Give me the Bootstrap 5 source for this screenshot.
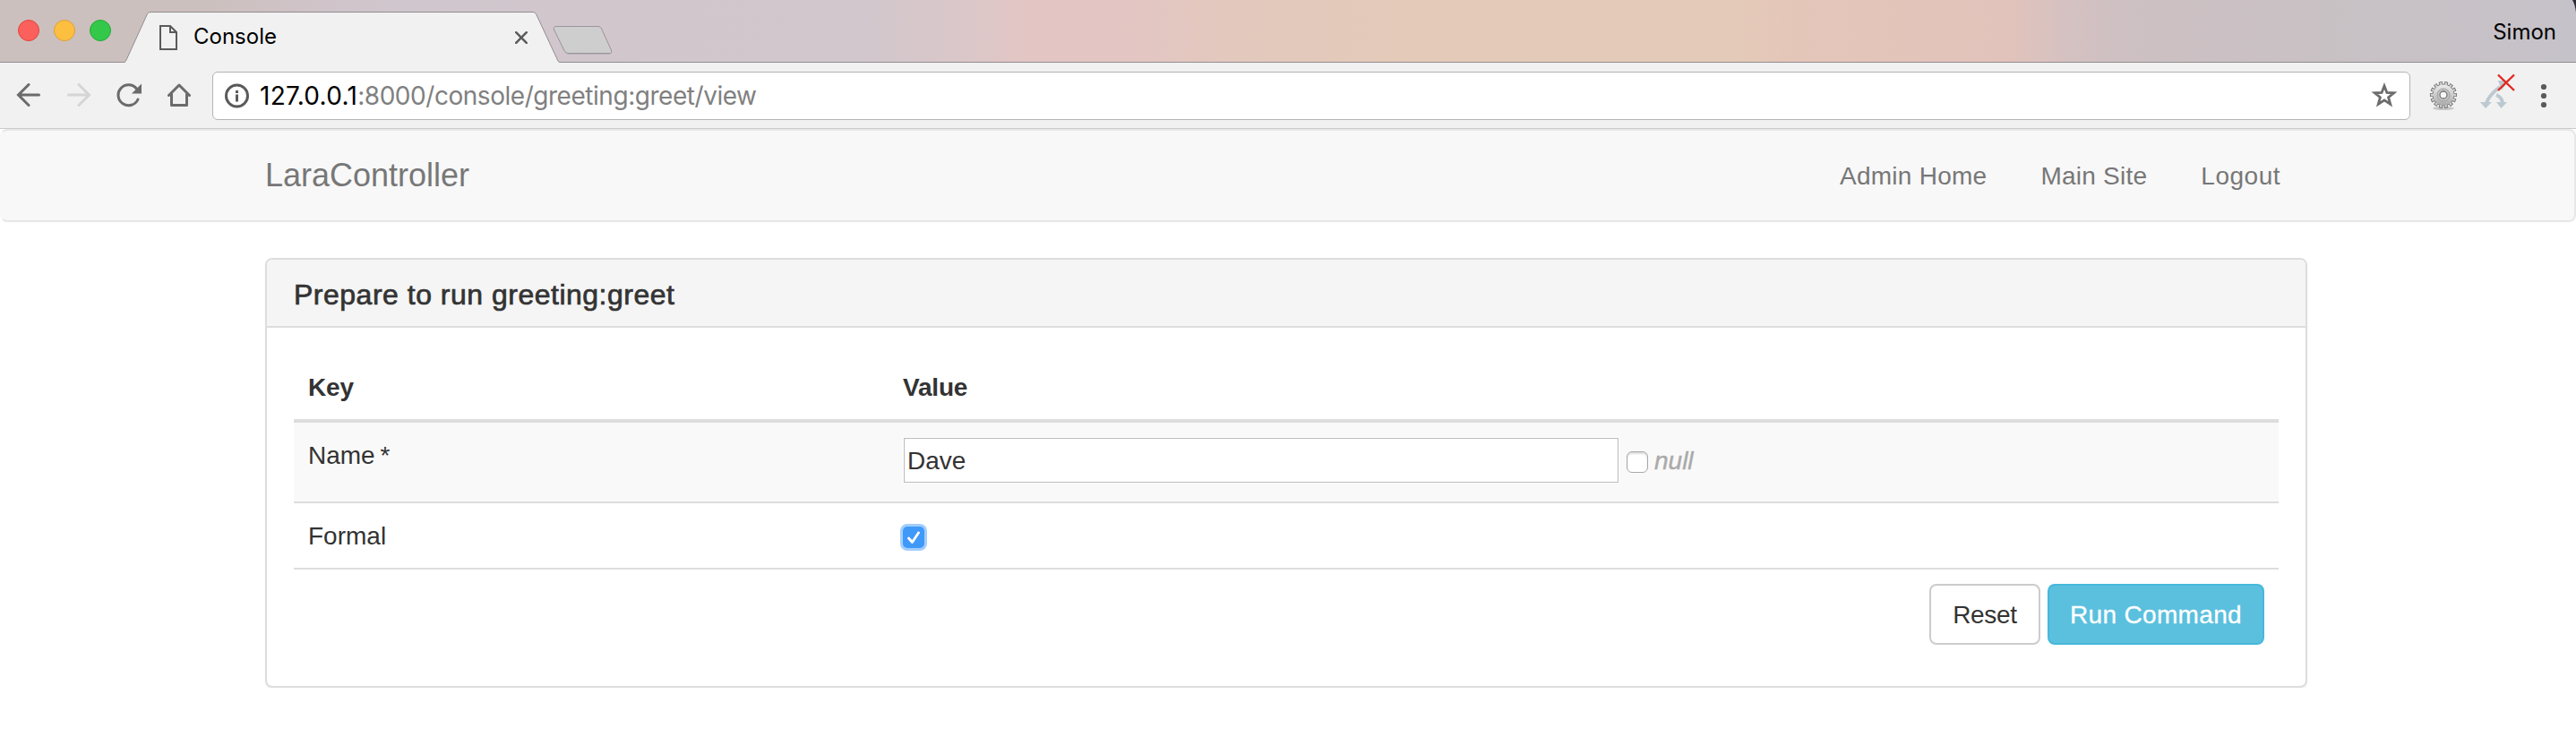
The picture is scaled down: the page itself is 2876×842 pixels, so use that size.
<!DOCTYPE html>
<html lang="en">
<head>
<meta charset="utf-8">
<title>Console</title>
<link href="https://cdn.jsdelivr.net/npm/bootstrap@5.3.0/dist/css/bootstrap.min.css" rel="stylesheet">
<script src="https://cdn.jsdelivr.net/npm/bootstrap@5.3.0/dist/js/bootstrap.bundle.min.js"></script>
<style>
  body { font: 28px/40px "Liberation Sans", Arial, sans-serif; color: #333; background: #fff; overflow: hidden; }
  svg { display: block; flex: none; }

  /* browser window */
  .titlebar {
    height: 70px; border-bottom: 1px solid #918d90; font-family: Inter, sans-serif; font-size: 24px; line-height: 30px; color: #000;
    background: linear-gradient(90deg, #ccc0be 0, #ccc0be 230px, #cfc3c7 330px, #d0c6cd 440px, #d2c7cc 972px, #dac7c9 1070px, #e3c6c4 1150px, #e3c6c2 1284px, #e3c9bd 1394px, #e4cab9 1559px, #e4cbb9 1926px, #e4c6b9 2000px, #e2c3bb 2238px, #d5c1c1 2310px, #cec0c3 2366px, #c8c1c4 2600px, #c6c2c9 2876px);
  }
  .lights { padding: 22px 0 0 20px; gap: 16px; width: 139px; }
  .light { width: 24px; height: 24px; border-radius: 50%; border: 1px solid; }
  .light-red { background: #fc605c; border-color: #e0443f; }
  .light-yellow { background: #fdbf40; border-color: #de9f34; }
  .light-green { background: #34c84a; border-color: #24aa36; }
  .tab { width: 486px; height: 70px; padding: 0 36px 0 39px; }
  .tab-shape { left: 0; top: 0; }
  .tab-page { margin-top: 28px; }
  .tab-label { margin: 26px 0 0 18px; }
  .tab-close { margin-top: 35px; }
  .newtab { margin: 28px 0 0 -8px; }
  .user { padding: 21px 22px 0 0; }
  .window-corner { right: 0; top: 0; }

  .toolbar { height: 74px; background: #f1f1f1; border-bottom: 1px solid #cbcbcb; padding: 0 24px 0 18px; }
  .tools { gap: 28px; width: 219px; }
  .omnibox {
    width: 2454px; height: 54px; border: 1px solid #b4b4b4; border-radius: 6px; background: #fff; padding: 0 13px;
    font: 28px/40px Inter, sans-serif; letter-spacing: -.46px; color: #808080;
  }
  .url { margin-left: 11px; padding-top: 1px; }
  .url-host { color: #000; letter-spacing: .3px; }
  .ext-gear { margin-left: 20px; }
  .ext-arrows { margin: -8px 0 0 24px; }

  /* page */
  .site-nav { height: 104px; background: #f8f8f8; border: 2px solid #e7e7e7; border-left-color: #f8f8f8; border-radius: 8px; padding: 0 300px 0 294px; }
  .navbar-brand.site-brand { font-size: 36px; line-height: 40px; color: #777; padding: 0; margin: 0; }
  .site-links { gap: 60px; margin: 2px 28px 0 0; }
  .site-links .nav-link { color: #777; padding: 0; letter-spacing: .25px; }
  .site-links .nav-link:last-child { letter-spacing: .5px; }
  .console-panel { width: 2280px; margin: 40px 0 0 296px; border: 2px solid #ddd; border-radius: 8px; box-shadow: 0 2px 2px rgba(0,0,0,.05); }
  .console-panel > .card-header { height: 76px; background: #f5f5f5; border-bottom: 2px solid #ddd; border-radius: 6px 6px 0 0; padding: 19px 30px 0; }
  .panel-heading { font-size: 32px; line-height: 40px; font-weight: 400; letter-spacing: .5px; -webkit-text-stroke: .7px #333; margin: 0; }
  .console-panel > .card-body { padding: 30px; }
  .params { margin: 0; color: #333; --bs-table-bg: transparent; table-layout: fixed; }
  .params > :not(caption) > * > * { padding: 16px; border: 0; border-top: 2px solid #ddd; color: #333; }
  .params > thead > tr > th { border-top: 0; padding: 17px 16px 15px; letter-spacing: -.2px; }
  .params > tbody > tr:first-child > td { border-top-width: 4px; background: #f9f9f9; box-shadow: none; }
  .params > tbody > tr > td.param-name { padding: 17px 16px 15px; word-spacing: -2px; }
  .params .key { width: 664px; }
  .value-row { margin: 1px 0 5px 1px; }
  .value-input { width: 798px; height: 50px; border: 1px solid #bbb; border-radius: 0; background: #fff; padding: 2px 3px 0; font: inherit; color: #333; outline: 1px solid #fff; }
  .null-box { width: 24px; height: 24px; border: 1px solid #a8a8a8; border-radius: 6px; background: #fff; box-shadow: inset 0 2px 2px #ddd; margin: 3px 7px 0 9px; }
  .null-label { color: #aaa; padding-top: 1px; -webkit-text-stroke: .4px #aaa; }
  .check-on { width: 24px; height: 24px; border-radius: 5px; background: #3f99f9; box-shadow: 0 0 0 3px #a2cdfc; margin-top: 10px; }
  .action { height: 68px; border: 2px solid #ccc; border-radius: 8px; font-size: 28px; line-height: 40px; padding: 13px 0 11px; white-space: nowrap; }
  .action-reset { width: 124px; background: #fff; color: #333; letter-spacing: -.3px; }
  .action-run { width: 242px; background: #5bc0de; border-color: #46b8da; color: #fff; letter-spacing: .33px; -webkit-text-stroke: .3px #fff; }
</style>
</head>
<body>
<header>
  <div class="titlebar d-flex position-relative">
    <div class="lights d-flex">
      <span class="light light-red"></span><span class="light light-yellow"></span><span class="light light-green"></span>
    </div>
    <div class="tab d-flex position-relative align-items-start">
      <svg class="tab-shape position-absolute" width="486" height="70" viewBox="0 0 486 70"><path d="M0 70 Q1 69 2 67 L25.500 15.500 Q27 13.500 29 13.500 H456 Q458 13.500 459.500 15.500 L483.500 67 Q485 69.500 486 70Z" fill="#f1f1f1"/><path d="M0 69.500 Q1 69 2 67 L25.500 15.500 Q27 13.500 29 13.500 H456 Q458 13.500 459.500 15.500 L483.500 67 Q484.500 69.500 486 69.500" fill="none" stroke="#918d90"/></svg>
      <svg class="tab-page position-relative" width="20" height="28" viewBox="0 0 20 28" fill="none" stroke="#5a5a5a" stroke-width="2"><path d="M1 1H12L19 8V27H1ZM12 1V8H19"/></svg>
      <span class="tab-label position-relative">Console</span>
      <svg class="tab-close position-relative ms-auto" width="14" height="14" viewBox="0 0 14 14" stroke="#5a5a5a" stroke-width="2.500" stroke-linecap="round"><path d="M1.200 1.200 12.800 12.800M12.800 1.200 1.200 12.800"/></svg>
    </div>
    <svg class="newtab" width="68" height="34" viewBox="0 0 68 34"><path d="M5 2.500H50Q53 2.500 54.500 5L65.500 29Q66.500 32.500 63 32.500H19Q15 32.500 13 29L2 5Q1 2.500 4 2.500" stroke="#b9b2b6" fill="none"/><path d="M4 1.500H51Q53.500 1.500 54.500 4L65.500 28Q66.500 31.500 63 31.500H17Q14.500 31.500 13 28.500L1.500 5Q.500 1.500 4 1.500Z" fill="#cecece" stroke="#9a9699"/></svg>
    <span class="user ms-auto">Simon</span>
    <svg class="window-corner position-absolute" width="4" height="14" viewBox="0 0 4 14"><path d="M0 0H4V14Q3 5 0 0Z" fill="#2c2a38"/></svg>
  </div>

  <div class="toolbar d-flex align-items-center">
    <div class="tools d-flex">
      <svg width="28" height="28" viewBox="0 0 28 28" fill="none" stroke="#6b6b6b" stroke-width="3" stroke-linecap="round"><path d="M25.500 13H3M14 1.500 2.500 13 14 24.500"/></svg>
      <svg width="28" height="28" viewBox="0 0 28 28" fill="none" stroke="#d5d5d5" stroke-width="3" stroke-linecap="round"><path d="M2.500 13H25M14 1.500 25.500 13 14 24.500"/></svg>
      <svg width="28" height="28" viewBox="0 0 28 28"><path d="M24 18A11.500 11.500 0 1 1 22.500 6" fill="none" stroke="#6b6b6b" stroke-width="3" stroke-linecap="round"/><path d="M28 .500V11.500H17Z" fill="#6b6b6b"/></svg>
      <svg width="28" height="28" viewBox="0 0 28 28" fill="none" stroke="#6b6b6b" stroke-width="3" stroke-linecap="round" stroke-linejoin="round"><path d="M2.500 13.500 14 2 25.500 13.500M5.500 12V24.500H22.500V12"/></svg>
    </div>
    <div class="omnibox d-flex align-items-center">
      <svg width="28" height="28" viewBox="0 0 28 28"><circle cx="13.500" cy="14" r="12" fill="none" stroke="#5a5a5a" stroke-width="3"/><path d="M12 8h3v3h-3zM12 12.500h3v8h-3z" fill="#5a5a5a"/></svg>
      <span class="url"><span class="url-host">127.0.0.1</span>:8000/console/greeting:greet/view</span>
      <svg class="ms-auto" width="30" height="30" viewBox="0 0 30 30"><path d="M15 4 17.900 11.500 25.700 11.800 19.600 16.700 21.700 24.200 15 19.800 8.300 24.200 10.400 16.700 4.300 11.800 12.100 11.500Z" fill="none" stroke="#6b6b6b" stroke-width="2.800"/></svg>
    </div>
    <svg class="ext-gear" width="34" height="34" viewBox="0 0 34 34">
      <defs><linearGradient id="metal" x2="0" y2="1"><stop stop-color="#ececec"/><stop offset="1" stop-color="#ababab"/></linearGradient></defs>
      <ellipse cx="17" cy="31" rx="12" ry="2" fill="#c8c8c8"/>
      <circle cx="17" cy="16" r="13.300" fill="none" stroke="#6a6a6a" stroke-width="3.600" pathLength="140" stroke-dasharray="6.400 3.600" stroke-dashoffset="3.200"/>
      <circle cx="17" cy="16" r="12.500" fill="#777"/>
      <circle cx="17" cy="16" r="12.600" fill="none" stroke="#cfcfcf" stroke-width="3.400" pathLength="140" stroke-dasharray="4 6" stroke-dashoffset="2"/>
      <circle cx="17" cy="16" r="11.600" fill="url(#metal)"/>
      <circle cx="17" cy="16" r="7" fill="#c4c4c4" stroke="#a0a0a0"/><circle cx="17" cy="16" r="4" fill="#f7f7f7" stroke="#777" stroke-width="1.300"/>
    </svg>
    <svg class="ext-arrows" width="40" height="42" viewBox="0 0 40 42">
      <g fill="none" stroke="#bdc9d1" stroke-width="4"><path d="M7 34Q8 26 22 15"/><path d="M18 24Q25 27 25 34"/></g>
      <path d="M0 32H13L6 39ZM18 32H30L23.500 39ZM20 8H31L24 19Z" fill="#bdc9d1"/>
      <path d="M20 1.500 38 19M38 1.500 20 19" stroke="#e12a22" stroke-width="2.400"/>
    </svg>
    <svg class="ms-auto" width="24" height="28" viewBox="0 0 24 28" fill="#5a5a5a"><circle cx="12" cy="4" r="3.100"/><circle cx="12" cy="14" r="3.100"/><circle cx="12" cy="24" r="3.100"/></svg>
  </div>
</header>

<nav class="navbar site-nav flex-nowrap">
  <a class="navbar-brand site-brand" href="#">LaraController</a>
  <div class="nav site-links ms-auto">
    <a class="nav-link" href="#">Admin Home</a>
    <a class="nav-link" href="#">Main Site</a>
    <a class="nav-link" href="#">Logout</a>
  </div>
</nav>

<main class="card console-panel">
  <div class="card-header"><h1 class="panel-heading">Prepare to run greeting:greet</h1></div>
  <div class="card-body">
    <table class="table params">
      <thead><tr><th class="key">Key</th><th>Value</th></tr></thead>
      <tbody>
        <tr>
          <td class="param-name">Name *</td>
          <td>
            <div class="value-row d-flex align-items-center">
              <input class="value-input" type="text" value="Dave"><span class="null-box"></span><em class="null-label">null</em>
            </div>
          </td>
        </tr>
        <tr>
          <td class="param-name">Formal</td>
          <td><div class="check-on"><svg width="24" height="24" viewBox="0 0 24 24" fill="none" stroke="#fff" stroke-width="2.800" stroke-linecap="round" stroke-linejoin="round"><path d="M6.500 13 10.500 17.500 17.500 7"/></svg></div></td>
        </tr>
        <tr>
          <td colspan="2"><div class="d-flex justify-content-end gap-2"><button class="btn action action-reset" type="button">Reset</button><button class="btn action action-run" type="button">Run Command</button></div></td>
        </tr>
      </tbody>
    </table>
  </div>
</main>
</body>
</html>
